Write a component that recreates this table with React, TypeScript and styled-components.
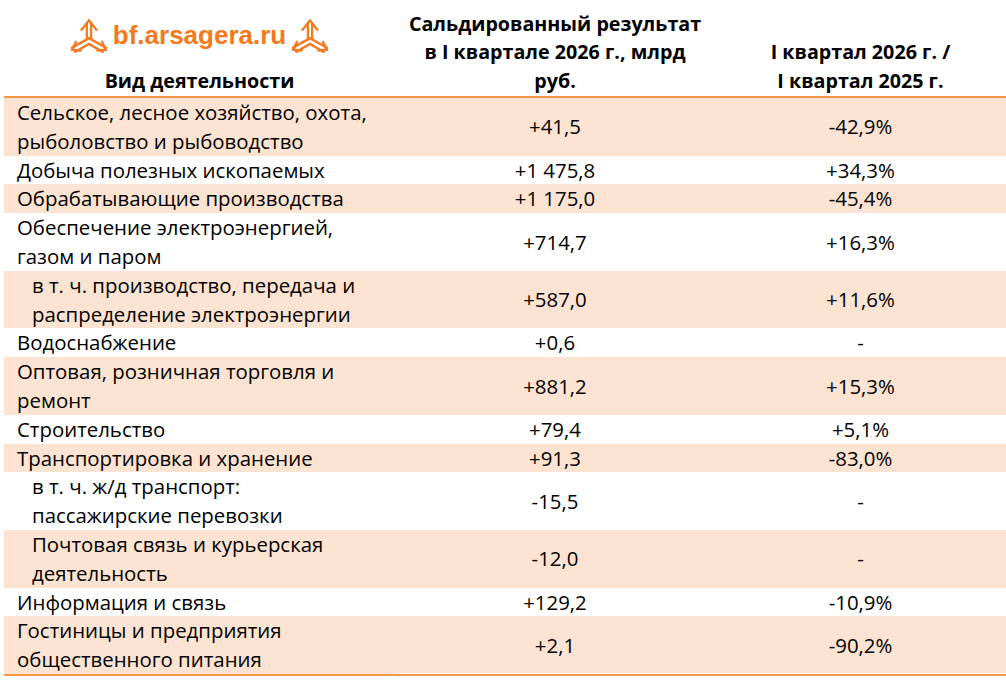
import { FunctionComponent } from 'react';
import styled, { createGlobalStyle } from 'styled-components';

const ORANGE_LINE = '#f79646';
const SHADE = '#fde4d2';
const BRAND = '#f37a21';
const LINE_H = '28.8px';

interface Row {
  name: string[];
  value: string;
  change: string;
  shaded?: boolean;
  indent?: boolean;
}

const rows: Row[] = [
  { name: ['Сельское, лесное хозяйство, охота,', 'рыболовство и рыбоводство'], value: '+41,5', change: '-42,9%', shaded: true },
  { name: ['Добыча полезных ископаемых'], value: '+1 475,8', change: '+34,3%' },
  { name: ['Обрабатывающие производства'], value: '+1 175,0', change: '-45,4%', shaded: true },
  { name: ['Обеспечение электроэнергией,', 'газом и паром'], value: '+714,7', change: '+16,3%' },
  { name: ['в т. ч. производство, передача и', 'распределение электроэнергии'], value: '+587,0', change: '+11,6%', shaded: true, indent: true },
  { name: ['Водоснабжение'], value: '+0,6', change: '-' },
  { name: ['Оптовая, розничная торговля и', 'ремонт'], value: '+881,2', change: '+15,3%', shaded: true },
  { name: ['Строительство'], value: '+79,4', change: '+5,1%' },
  { name: ['Транспортировка и хранение'], value: '+91,3', change: '-83,0%', shaded: true },
  { name: ['в т. ч. ж/д транспорт:', 'пассажирские перевозки'], value: '-15,5', change: '-', indent: true },
  { name: ['Почтовая связь и курьерская', 'деятельность'], value: '-12,0', change: '-', shaded: true, indent: true },
  { name: ['Информация и связь'], value: '+129,2', change: '-10,9%' },
  { name: ['Гостиницы и предприятия', 'общественного питания'], value: '+2,1', change: '-90,2%', shaded: true },
];

const GlobalStyle = createGlobalStyle`
  html, body {
    margin: 0;
    background: #ffffff;
  }
  body {
    font-family: "Open Sans", "Noto Sans", sans-serif;
    color: #000000;
  }
`;

const Page = styled.div`
  width: 1006px;
  padding-left: 4px;
  box-sizing: border-box;
`;

const Table = styled.div`
  display: grid;
  grid-template-columns: 391px 320px 1fr;
  font-size: 20.4px;
  line-height: ${LINE_H};
`;

const HeadCell = styled.div`
  height: 96px;
  border-bottom: 2px solid ${ORANGE_LINE};
  display: flex;
  flex-direction: column;
  justify-content: flex-end;
  align-items: center;
  text-align: center;
  font-weight: 700;
  font-size: 19.7px;
  white-space: nowrap;
`;

const Logo = styled.div`
  display: flex;
  align-items: center;
  gap: 4px;
  margin-bottom: 14px;
`;

const LogoText = styled.span`
  font-family: "Liberation Sans", Arial, sans-serif;
  font-weight: 700;
  font-size: 26px;
  line-height: 30px;
  color: ${BRAND};
`;

const Cell = styled.div<{ $shaded?: boolean; $indent?: boolean; $center?: boolean; $last?: boolean }>`
  background: ${(p) => (p.$shaded ? SHADE : '#ffffff')};
  display: flex;
  flex-direction: column;
  justify-content: center;
  align-items: ${(p) => (p.$center ? 'center' : 'flex-start')};
  padding-left: ${(p) => (p.$center ? 0 : p.$indent ? 28 : 13)}px;
  white-space: nowrap;
  border-bottom: ${(p) => (p.$last ? `2px solid ${ORANGE_LINE}` : 'none')};
  box-shadow: ${(p) => (p.$last && p.$center ? 'inset 0 -1px 0 #ffffff' : 'none')};
`;

const ArsageraMark: FunctionComponent = () => (
  <svg width="40" height="36" viewBox="0 0 38 34" fill="none" stroke={BRAND} strokeWidth="2.2" strokeLinecap="square">
    <polyline points="12,12 19,3 26,12" />
    <line x1="17" y1="6" x2="17" y2="21" />
    <line x1="21" y1="6" x2="21" y2="21" />
    <polyline points="3,29 19,20 35,29" />
    <polyline points="6,33 19,25.5 32,33" />
    <polyline points="6.5,23.8 3,31 10.9,31.8" />
    <polyline points="31.5,23.8 35,31 27.1,31.8" />
  </svg>
);

const App: FunctionComponent = () => {
  return (
    <Page>
      <GlobalStyle />
      <Table>
        <HeadCell>
          <Logo>
            <ArsageraMark />
            <LogoText>bf.arsagera.ru</LogoText>
            <ArsageraMark />
          </Logo>
          <div>Вид деятельности</div>
        </HeadCell>
        <HeadCell>
          <div>Сальдированный результат</div>
          <div>в I квартале 2026 г., млрд</div>
          <div>руб.</div>
        </HeadCell>
        <HeadCell>
          <div>I квартал 2026 г. /</div>
          <div>I квартал 2025 г.</div>
        </HeadCell>
        {rows.map((r, i) => {
          const last = i === rows.length - 1;
          return [
            <Cell key={`n${i}`} $shaded={r.shaded} $indent={r.indent} $last={last}>
              {r.name.map((line) => (
                <div key={line}>{line}</div>
              ))}
            </Cell>,
            <Cell key={`v${i}`} $shaded={r.shaded} $center $last={last}>
              {r.value}
            </Cell>,
            <Cell key={`c${i}`} $shaded={r.shaded} $center $last={last}>
              {r.change}
            </Cell>,
          ];
        })}
      </Table>
    </Page>
  );
};

export default App;
